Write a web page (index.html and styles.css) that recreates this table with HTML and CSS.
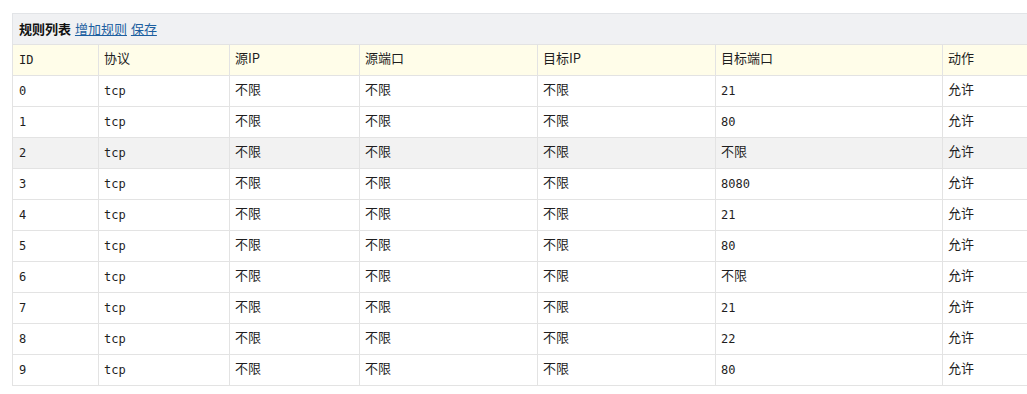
FILE: index.html
```html
<!DOCTYPE html>
<html>
<head>
<meta charset="utf-8">
<link rel="stylesheet" href="styles.css">
</head>
<body>
<div class="wrap">
  <div class="panel">
    <div class="caption"><b>规则列表</b> <a href="#">增加规则</a> <a href="#">保存</a></div>
    <table class="rules">
      <colgroup>
        <col class="c1"><col class="c2"><col class="c3"><col class="c4"><col class="c5"><col class="c6"><col class="c7">
      </colgroup>
      <thead>
        <tr><th>ID</th><th class="zh">协议</th><th class="zh">源IP</th><th class="zh">源端口</th><th class="zh">目标IP</th><th class="zh">目标端口</th><th class="zh">动作</th></tr>
      </thead>
      <tbody>
        <tr><td>0</td><td>tcp</td><td class="zh">不限</td><td class="zh">不限</td><td class="zh">不限</td><td>21</td><td class="zh">允许</td></tr>
        <tr><td>1</td><td>tcp</td><td class="zh">不限</td><td class="zh">不限</td><td class="zh">不限</td><td>80</td><td class="zh">允许</td></tr>
        <tr class="hl"><td>2</td><td>tcp</td><td class="zh">不限</td><td class="zh">不限</td><td class="zh">不限</td><td class="zh">不限</td><td class="zh">允许</td></tr>
        <tr><td>3</td><td>tcp</td><td class="zh">不限</td><td class="zh">不限</td><td class="zh">不限</td><td>8080</td><td class="zh">允许</td></tr>
        <tr><td>4</td><td>tcp</td><td class="zh">不限</td><td class="zh">不限</td><td class="zh">不限</td><td>21</td><td class="zh">允许</td></tr>
        <tr><td>5</td><td>tcp</td><td class="zh">不限</td><td class="zh">不限</td><td class="zh">不限</td><td>80</td><td class="zh">允许</td></tr>
        <tr><td>6</td><td>tcp</td><td class="zh">不限</td><td class="zh">不限</td><td class="zh">不限</td><td class="zh">不限</td><td class="zh">允许</td></tr>
        <tr><td>7</td><td>tcp</td><td class="zh">不限</td><td class="zh">不限</td><td class="zh">不限</td><td>21</td><td class="zh">允许</td></tr>
        <tr><td>8</td><td>tcp</td><td class="zh">不限</td><td class="zh">不限</td><td class="zh">不限</td><td>22</td><td class="zh">允许</td></tr>
        <tr><td>9</td><td>tcp</td><td class="zh">不限</td><td class="zh">不限</td><td class="zh">不限</td><td>80</td><td class="zh">允许</td></tr>
      </tbody>
    </table>
  </div>
</div>
</body>
</html>
```
FILE: styles.css
```css
html, body {
  margin: 0;
  padding: 0;
  background: #fff;
  overflow: hidden;
}
body {
  font-family: "DejaVu Sans Mono", "Noto Sans CJK SC", monospace;
  font-size: 12px;
  color: #1e1e1e;
}
.wrap {
  padding: 13px 0 0 12px;
  width: 1015px;
  overflow: hidden;
}
.panel {
  width: 1100px;
}
.caption {
  box-sizing: border-box;
  height: 31px;
  line-height: 30px;
  padding: 0 6px;
  background: #f0f1f3;
  border: 1px solid #e2e4e7;
  border-bottom: none;
  font-family: "Noto Sans CJK SC", sans-serif;
  font-size: 13px;
}
.caption b {
  font-weight: bold;
  color: #111;
}
.caption a {
  color: #1d5fa0;
  text-decoration: underline;
  margin-left: 1px;
}
.rules {
  border-collapse: collapse;
  table-layout: fixed;
  width: 1100px;
}
.c1 { width: 86px; }
.c2 { width: 131px; }
.c3 { width: 130px; }
.c4 { width: 178px; }
.c5 { width: 178px; }
.c6 { width: 227px; }
.c7 { width: 170px; }
.rules th, .rules td {
  border: 1px solid #e3e3e3;
  height: 31px;
  padding: 0 5px;
  text-align: left;
  font-weight: normal;
  white-space: nowrap;
  box-sizing: border-box;
  line-height: 16px;
}
.rules td:first-child, .rules th:first-child { padding-left: 6px; }
.rules .zh {
  font-family: "Noto Sans CJK SC", sans-serif;
  font-size: 13px;
  padding-bottom: 5px;
}
.rules th {
  background: #fffde9;
}
.rules tr.hl td {
  background: #f2f2f2;
}
```
